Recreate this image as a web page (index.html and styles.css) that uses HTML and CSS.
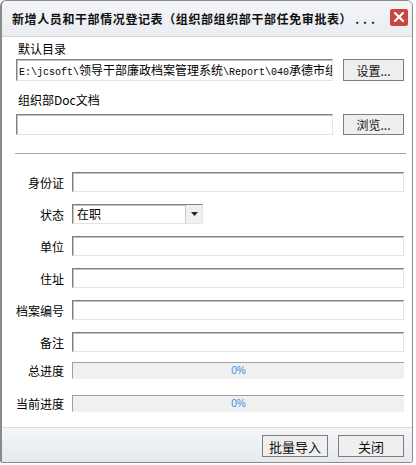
FILE: index.html
```html
<!DOCTYPE html>
<html lang="zh-CN">
<head>
<meta charset="UTF-8">
<title>新增人员和干部情况登记表</title>
<link rel="stylesheet" href="styles.css">
</head>
<body>
<div class="window">
    <div class="titlebar">
        <span class="title">新增人员和干部情况登记表（组织部组织部干部任免审批表）<span class="dots">...</span></span>
        <span class="close">
            <svg width="10" height="10" viewBox="0 0 10 10"><path d="M1 1 L9 9 M9 1 L1 9" stroke="#fff" stroke-width="2.2" stroke-linecap="square"/></svg>
        </span>
    </div>

    <div class="content">
        <div class="group-label">默认目录</div>
        <div class="pick-row">
            <div class="textbox path">E:\jcsoft\<span class="cjk">领导干部廉政档案管理系统</span>\Report\040<span class="cjk">承德市组</span></div>
            <button class="btn">设置...</button>
        </div>

        <div class="group-label second">组织部Doc文档</div>
        <div class="pick-row low">
            <div class="textbox"></div>
            <button class="btn">浏览...</button>
        </div>

        <div class="rule"></div>

        <div class="form">
            <label>身份证</label>
            <div class="textbox"></div>
            <label>状态</label>
            <div class="combo">
                <span class="combo-text">在职</span>
                <span class="combo-arrow">
                    <svg width="7" height="4" viewBox="0 0 7 4"><path d="M0 0 H7 L3.5 4 Z" fill="#222"/></svg>
                </span>
            </div>
            <label>单位</label>
            <div class="textbox"></div>
            <label>住址</label>
            <div class="textbox"></div>
            <label>档案编号</label>
            <div class="textbox"></div>
            <label>备注</label>
            <div class="textbox"></div>
        </div>

        <div class="progress-list">
            <label>总进度</label>
            <div class="progress">0%</div>
            <label>当前进度</label>
            <div class="progress">0%</div>
        </div>
    </div>

    <div class="footer">
        <button class="btn big">批量导入</button>
        <button class="btn big">关闭</button>
    </div>
</div>
</body>
</html>
```

FILE: styles.css
```css
body {
    margin: 0;
    padding: 0;
    background-color: #fff;
    font-family: "Noto Sans CJK SC", "Liberation Sans", sans-serif;
    font-size: 12px;
    color: #000;
}
.window {
    width: 413px;
    height: 463px;
    box-sizing: border-box;
    border: 1px solid #8a8a8a;
    border-left-width: 2px;
    border-radius: 6px 6px 3px 3px;
    background-color: #fff;
    display: flex;
    flex-direction: column;
    overflow: hidden;
}
.titlebar {
    height: 35px;
    flex-shrink: 0;
    display: flex;
    align-items: center;
    justify-content: space-between;
    padding: 0 4px 0 10px;
    background: linear-gradient(#f3f5f8, #eaedf1);
    border-bottom: 1px solid #d3d7dc;
}
.title {
    font-weight: bold;
    font-size: 12px;
    letter-spacing: 0.6px;
    white-space: nowrap;
    color: #111;
}
.dots {
    letter-spacing: 4px;
    margin-left: 3px;
}
.close {
    width: 18px;
    height: 17px;
    border-radius: 2px;
    background-color: #c9473e;
    display: flex;
    align-items: center;
    justify-content: center;
    margin-top: -3px;
}
.content {
    flex: 1;
    padding: 4px 8px 0 14px;
}
.group-label {
    line-height: 16px;
    height: 16px;
    margin-bottom: 2px;
    padding-left: 2px;
}
.group-label.second {
    margin-top: 11px;
    margin-bottom: 6px;
}
.pick-row {
    display: flex;
    gap: 10px;
    height: 22px;
}
.pick-row.low {
    height: 21px;
}
.pick-row .textbox {
    flex: 1;
    min-width: 0;
    height: 100%;
}
.pick-row .btn {
    flex-shrink: 0;
}
.textbox {
    box-sizing: border-box;
    height: 20px;
    border: 1px solid;
    border-color: #808080 #e3e3e3 #e3e3e3 #808080;
    box-shadow: inset 1px 1px 0 #c2c2c2;
    background-color: #fff;
}
.path {
    font-family: "Liberation Mono", "Noto Sans CJK SC", monospace;
    font-size: 10px;
    line-height: 19px;
    padding-left: 2px;
    white-space: nowrap;
    overflow: hidden;
}
.path .cjk {
    font-family: "Noto Sans CJK SC", sans-serif;
    font-size: 12px;
}
.btn {
    box-sizing: border-box;
    width: 61px;
    height: 100%;
    border: 1px solid #7d7d7d;
    background-color: #efefef;
    font-family: inherit;
    font-size: 12px;
    color: #111;
    padding: 0;
}
.rule {
    margin: 18px -2px 0 -1px;
    border-top: 1px solid #a6a6a6;
}
.form {
    margin-top: 18px;
    display: grid;
    grid-template-columns: 48px 1fr;
    column-gap: 8px;
    row-gap: 12px;
    align-items: center;
}
.form label, .progress-list label {
    text-align: right;
    white-space: nowrap;
}
.combo {
    box-sizing: border-box;
    width: 131px;
    height: 20px;
    display: flex;
    border: 1px solid;
    border-color: #808080 #e3e3e3 #e3e3e3 #808080;
    box-shadow: inset 1px 1px 0 #c2c2c2;
}
.combo-text {
    flex: 1;
    padding-left: 4px;
    line-height: 18px;
}
.combo-arrow {
    width: 16px;
    display: flex;
    align-items: center;
    justify-content: center;
    background-color: #f0f0f0;
    border-left: 1px solid #c8c8c8;
}
.progress-list {
    margin-top: 10px;
    display: grid;
    grid-template-columns: 48px 1fr;
    column-gap: 8px;
    row-gap: 16px;
    align-items: center;
}
.progress {
    box-sizing: border-box;
    height: 17px;
    background-color: #f0f0f0;
    border-top: 1px solid #a0a0a0;
    border-left: 1px solid #a0a0a0;
    border-bottom: 1px solid #f4f4f4;
    text-align: center;
    font-family: "Liberation Sans", sans-serif;
    font-size: 10px;
    line-height: 15px;
    color: #2e8ee6;
}
.footer {
    height: 34px;
    flex-shrink: 0;
    display: flex;
    justify-content: flex-end;
    align-items: center;
    gap: 10px;
    padding-right: 8px;
    border-top: 1px solid #d6dbe1;
    background: linear-gradient(#f4f6f8, #e5e9ee);
}
.btn.big {
    width: 66px;
    height: 22px;
    font-size: 13px;
    margin-top: 2px;
}
```
